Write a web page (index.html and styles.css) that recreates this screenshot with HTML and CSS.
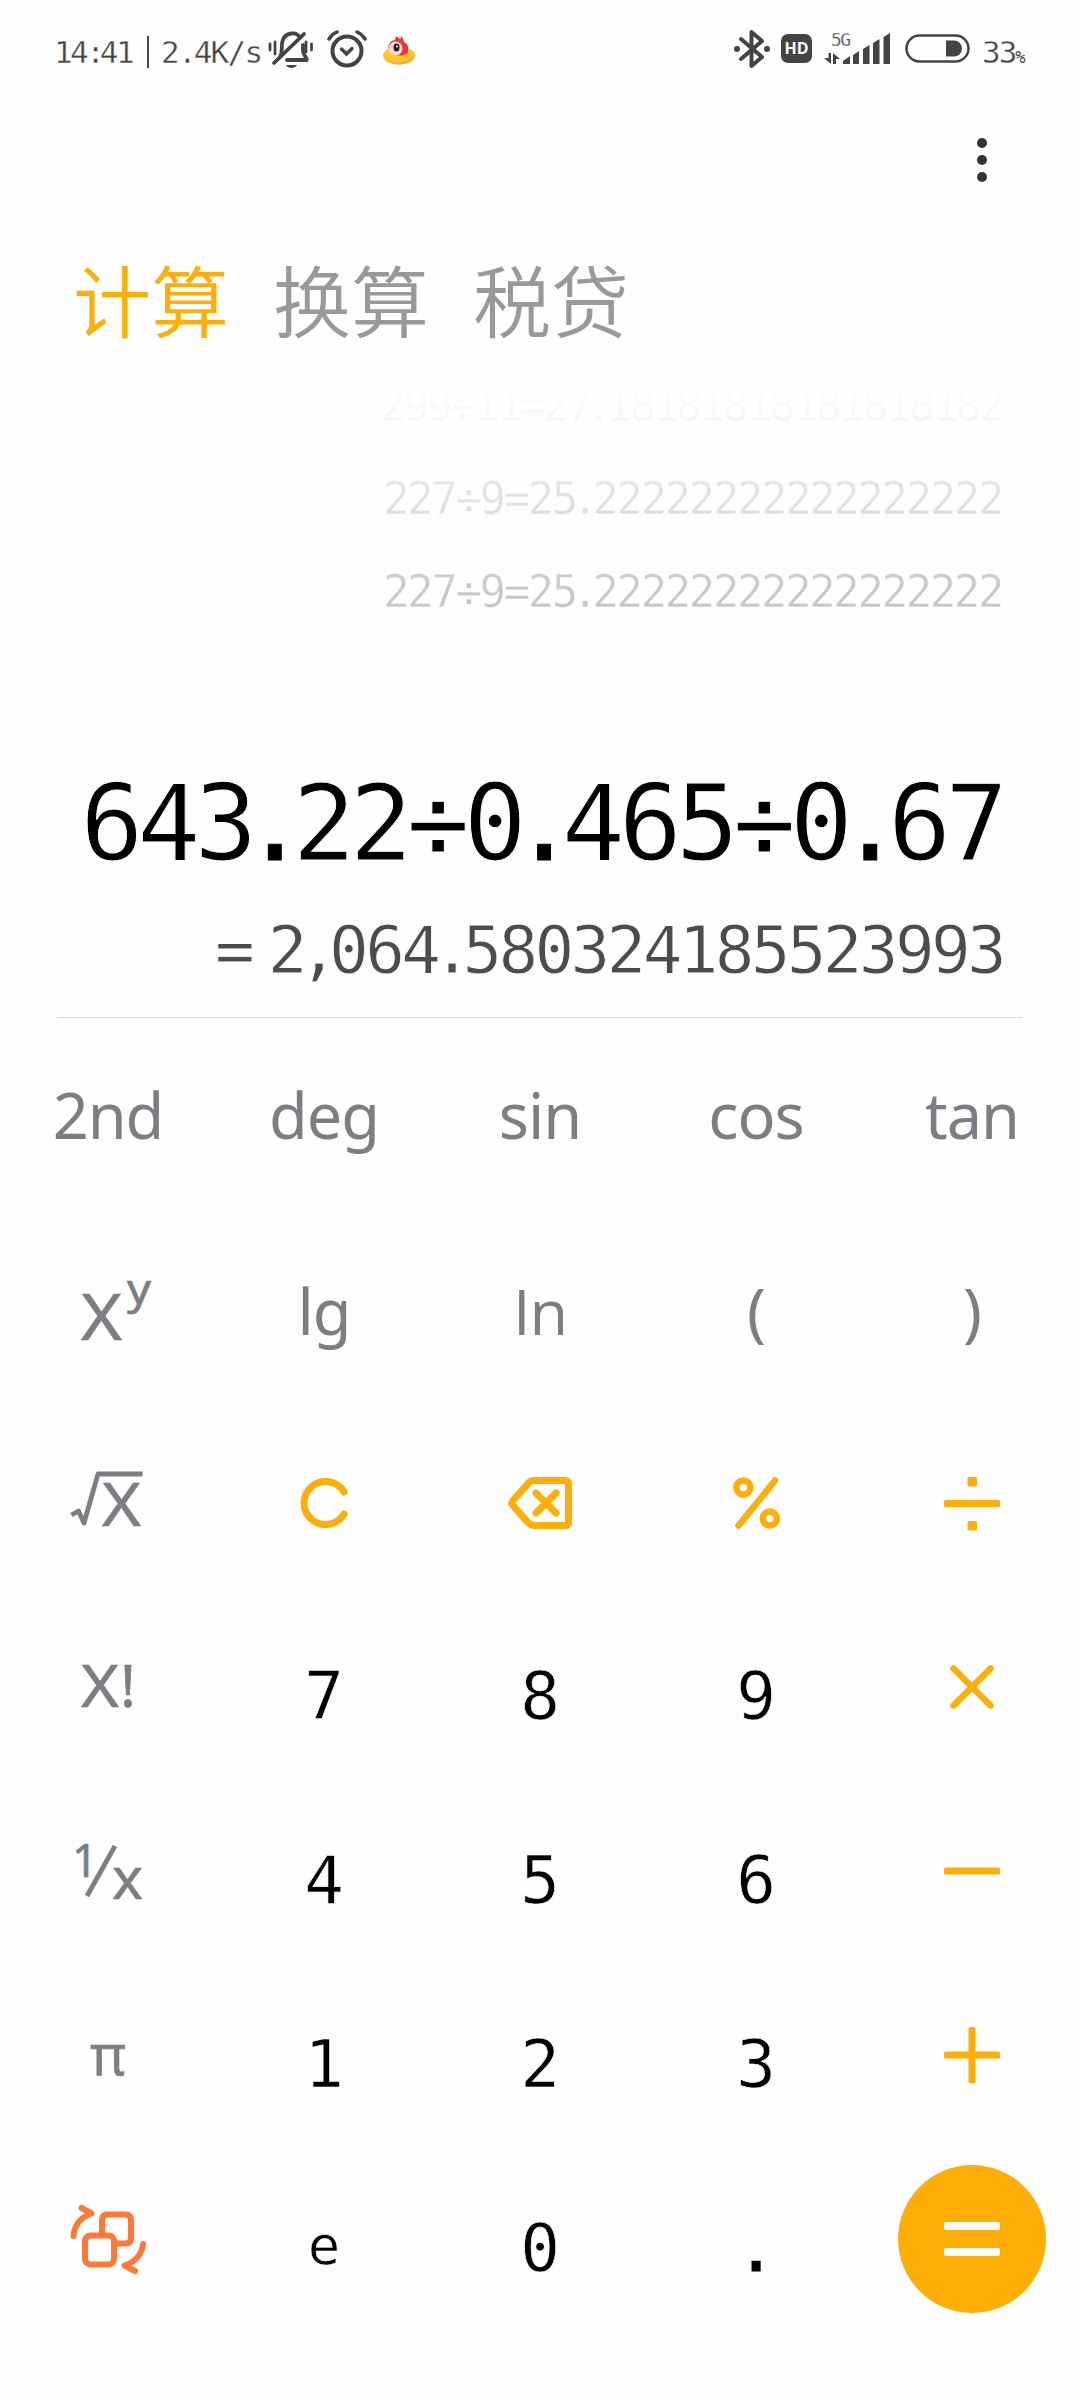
FILE: index.html
```html
<!DOCTYPE html>
<html lang="zh">
  <head>
    <meta charset="UTF-8" />
    <meta name="viewport" content="width=device-width, initial-scale=1.0" />
    <title>计算</title>
    <link rel="stylesheet" href="styles.css">
  </head>
  <body>
    <div class="status-bar">
      <div class="status-left">
        <span class="time">14<i>:</i>41</span>
        <span class="bar"></span>
        <span class="speed">2<i>.</i>4K/s</span>
        <svg class="bell" width="46" height="40" viewBox="0 0 46 40" fill="none" stroke="#444" stroke-width="3.8" stroke-linecap="round">
          <path d="M12 27C15 22 13 16 14.500 11C17 2 29 1 32 8" />
          <path d="M35 15V21C35 26 40 28 38.500 30H19" />
          <path d="M36 4L6 33" />
          <path d="M2 14V20M7 12V24M38 12V22M43.500 14V20" stroke-width="2.8" />
          <path d="M18 35H29C27 39 20 39 18 35Z" fill="#444" stroke="none" />
        </svg>
        <svg class="alarm" width="42" height="40" viewBox="0 0 42 40" fill="none" stroke="#444" stroke-linecap="round">
          <circle cx="21" cy="21" r="14.500" stroke-width="4" />
          <path d="M15.500 19L20.500 24L26 18.500" stroke-width="3.500" />
          <path d="M3 9Q6 4 11 2M31 2Q36 4 39 9" stroke-width="3.500" />
        </svg>
        <svg class="app" width="36" height="32" viewBox="0 0 36 32">
          <ellipse cx="17" cy="20.500" rx="16" ry="9" fill="#ffc629" />
          <path d="M4 24Q18 32 32 21Q31 28 19 29.500Q8 30 4 24Z" fill="#f5a94b" />
          <path d="M6 12Q8 5 13 5L14 1L18 4L20 1L22 7Q27 9 26 15Q27 19 22 20Q13 22 8 17Z" fill="#ea3540" />
          <ellipse cx="13.500" cy="13.500" rx="7" ry="7" fill="#fbd8d4" transform="rotate(35 13.500 13.500)" />
          <ellipse cx="14.500" cy="12.500" rx="3" ry="4" fill="#222" />
          <circle cx="15" cy="11.500" r="1" fill="#fff" />
        </svg>
      </div>
      <div class="status-right">
        <svg class="bluetooth" width="38" height="40" viewBox="0 0 38 40" fill="none" stroke="#444" stroke-width="4" stroke-linejoin="round" stroke-linecap="round">
          <path d="M8 10L29 28L18.500 37V3L29 12L8 30" />
          <circle cx="4" cy="20" r="1.500" stroke-width="3" />
          <circle cx="34" cy="20" r="1.500" stroke-width="3" />
        </svg>
        <span class="hd">HD</span>
        <div class="network">
          <span class="network-type">5G</span>
          <svg width="67" height="32" viewBox="0 0 67 32" fill="#444">
            <path d="M4.500 20H7V31L0 25H4.500ZM9 20L16 26H12V31H9Z" />
            <path d="M19 31V28L26 23V31ZM29 31V22L35 18V31ZM39 31V16L45.500 12V31ZM49 31V10L55.500 6V31ZM59.500 31V4L66 0V31Z" />
          </svg>
        </div>
        <svg class="battery" width="66" height="30" viewBox="0 0 66 30">
          <rect x="1.500" y="1.500" width="62" height="26" rx="13" fill="none" stroke="#444" stroke-width="2.500" />
          <path d="M41 6.500H49A8 8 0 0 1 49 22.500H41Z" fill="#444" />
        </svg>
        <span class="percent">33<small>%</small></span>
      </div>
    </div>

    <div class="toolbar">
      <span class="dot"></span>
      <span class="dot"></span>
      <span class="dot"></span>
    </div>

    <div class="tabs">
      <span class="tab active">计算</span>
      <span class="tab">换算</span>
      <span class="tab">税贷</span>
    </div>

    <div class="history">
      <p class="long">299÷11=27<i>.</i>18181818181818182</p>
      <p>227÷9=25<i>.</i>22222222222222222</p>
      <p>227÷9=25<i>.</i>22222222222222222</p>
    </div>

    <div class="expression">643<i>.</i>22÷0<i>.</i>465÷0<i>.</i>67</div>
    <div class="result">=<i class="space"> </i>2<i>,</i>064<i>.</i>580324185523993</div>

    <div class="keypad">
      <div class="key sci">2nd</div>
      <div class="key sci">deg</div>
      <div class="key sci">sin</div>
      <div class="key sci">cos</div>
      <div class="key sci">tan</div>

      <div class="key">
        <svg class="label" width="100" height="80" viewBox="58 1272 100 80">
          <text x="81" y="1340" font-size="63" textLength="41" lengthAdjust="spacingAndGlyphs">X</text>
          <text x="127" y="1304" font-size="42" textLength="24" lengthAdjust="spacingAndGlyphs">y</text>
        </svg>
      </div>
      <div class="key sci">lg</div>
      <div class="key sci plain">In</div>
      <div class="key sci">(</div>
      <div class="key sci">)</div>

      <div class="key">
        <svg class="label" width="100" height="80" viewBox="58 1463 100 80">
          <path class="line" d="M71.500 1515L78.500 1511L84 1523L98 1474H142.500" />
          <text x="102" y="1526" font-size="60" textLength="39" lengthAdjust="spacingAndGlyphs">X</text>
        </svg>
      </div>
      <div class="key">
        <svg class="icon" width="70" height="70" viewBox="289 1468 70 70">
          <path d="M344 1492A21.500 21.500 0 1 0 344 1514" />
        </svg>
      </div>
      <div class="key">
        <svg class="icon" width="70" height="70" viewBox="505 1468 70 70">
          <path d="M534 1480.500H565Q568.500 1480.500 568.500 1484V1522Q568.500 1525.500 565 1525.500H534Q531 1525.500 529 1523.500L512.500 1505Q511 1503 512.500 1501L529 1482.500Q531 1480.500 534 1480.500Z" />
          <path d="M536 1493L556 1513M556 1493L536 1513" />
        </svg>
      </div>
      <div class="key">
        <svg class="icon" width="70" height="70" viewBox="721 1468 70 70">
          <circle cx="743.300" cy="1487.500" r="7" stroke-width="6.500" />
          <circle cx="769.800" cy="1518.500" r="7" stroke-width="6.500" />
          <path d="M775 1480.500L738.500 1525.500" stroke-width="6.500" />
        </svg>
      </div>
      <div class="key">
        <svg class="icon fill" width="70" height="70" viewBox="937 1468 70 70">
          <rect x="944" y="1500" width="56" height="7" rx="1.500" />
          <rect x="967.500" y="1477" width="9.500" height="9.500" rx="1.500" />
          <rect x="967.500" y="1521" width="9.500" height="9.500" rx="1.500" />
        </svg>
      </div>

      <div class="key">
        <svg class="label" width="100" height="80" viewBox="58 1647 100 80">
          <text x="81" y="1707" font-size="59" textLength="38" lengthAdjust="spacingAndGlyphs">X</text>
          <text x="120" y="1707" font-size="59">!</text>
        </svg>
      </div>
      <div class="key num">7</div>
      <div class="key num">8</div>
      <div class="key num">9</div>
      <div class="key">
        <svg class="icon" width="70" height="70" viewBox="937 1652 70 70">
          <path d="M953.500 1668.500L990.500 1705.500M990.500 1668.500L953.500 1705.500" stroke-width="6.500" />
        </svg>
      </div>

      <div class="key">
        <svg class="label" width="100" height="80" viewBox="58 1831 100 80">
          <text x="72" y="1877" font-size="45">1</text>
          <path class="line" d="M115 1846L87 1896" />
          <text x="112" y="1899" font-size="59" textLength="31" lengthAdjust="spacingAndGlyphs">x</text>
        </svg>
      </div>
      <div class="key num">4</div>
      <div class="key num">5</div>
      <div class="key num">6</div>
      <div class="key">
        <svg class="icon fill" width="70" height="70" viewBox="937 1836 70 70">
          <rect x="944" y="1867.500" width="56" height="7" rx="1.500" />
        </svg>
      </div>

      <div class="key">
        <svg class="label" width="100" height="80" viewBox="58 2015 100 80">
          <text x="90" y="2075" font-size="57" textLength="36" lengthAdjust="spacingAndGlyphs">π</text>
        </svg>
      </div>
      <div class="key num">1</div>
      <div class="key num">2</div>
      <div class="key num">3</div>
      <div class="key">
        <svg class="icon fill" width="70" height="70" viewBox="937 2020 70 70">
          <rect x="944" y="2051.500" width="56" height="7" rx="1.500" />
          <rect x="968.500" y="2027" width="7" height="56" rx="1.500" />
        </svg>
      </div>

      <div class="key">
        <svg class="convert" width="90" height="80" viewBox="63 2199 90 80">
          <path d="M102 2233V2220Q102 2214.500 107.500 2214.500H125.500Q131 2214.500 131 2220V2238Q131 2243.500 125.500 2243.500H117" />
          <rect x="85" y="2235.500" width="29" height="29" rx="5.500" />
          <path d="M73.500 2236Q75 2219 91.500 2213.500L81.500 2208" />
          <path d="M143 2244Q141 2260 124.500 2265.500L135 2271" />
        </svg>
      </div>
      <div class="key num small">e</div>
      <div class="key num">0</div>
      <div class="key num point">.</div>
      <div class="key">
        <div class="equals"><span></span><span></span></div>
      </div>
    </div>
  </body>
</html>
```
FILE: styles.css
```css
* {
  box-sizing: border-box;
}
body {
  margin: 0;
  width: 1080px;
  height: 2400px;
  background-color: #fefefe;
  font-family: "DejaVu Sans Mono", "Noto Sans CJK SC", monospace;
  overflow: hidden;
}
i {
  font-style: normal;
}

/* status bar */
.status-bar {
  height: 100px;
  padding: 0 54px 0 54px;
  display: flex;
  justify-content: space-between;
  color: #444;
  font-size: 31px;
  line-height: 40px;
}
.status-left,
.status-right {
  display: flex;
  align-items: flex-start;
  padding-top: 30px;
}
.time,
.speed,
.percent {
  padding-top: 2px;
  letter-spacing: -2.6px;
  -webkit-text-stroke: 0.4px #fefefe;
}
.time {
  width: 81px;
}
.time i {
  letter-spacing: -5px;
}
.bar {
  width: 2px;
  height: 32px;
  margin: 6px 12px 0 12px;
  background-color: #444;
}
.speed {
  width: 107px;
  letter-spacing: -1.7px;
}
.speed i {
  letter-spacing: -3px;
}
.alarm {
  margin-left: 12px;
}
.app {
  margin: 5px 0 0 14px;
}
.bluetooth {
  margin-top: -1px;
}
.hd {
  width: 31px;
  height: 29px;
  margin: 4px 12px 0 10px;
  border-radius: 7px;
  background-color: #444;
  color: #fff;
  font: bold 16px/29px "Open Sans", sans-serif;
  text-align: center;
}
.network {
  position: relative;
  padding-top: 3px;
  height: 40px;
}
.network-type {
  position: absolute;
  left: 7px;
  top: 0;
  font-size: 18px;
  line-height: 20px;
  letter-spacing: -1.7px;
  -webkit-text-stroke: 0.3px #fefefe;
}
.battery {
  margin: 4px 11px 0 14px;
}
.percent {
  width: 44px;
  letter-spacing: -2px;
  white-space: nowrap;
}
.percent small {
  font-size: 17px;
  -webkit-text-stroke: 0;
}

/* overflow menu */
.toolbar {
  height: 144px;
  padding: 38px 93px 0 0;
  display: flex;
  flex-direction: column;
  align-items: flex-end;
  gap: 7px;
}
.dot {
  width: 10px;
  height: 10px;
  border-radius: 50%;
  background-color: #333;
}

/* tabs */
.tabs {
  display: flex;
  gap: 44px;
  height: 115px;
  padding-left: 73px;
  font-family: "Noto Sans CJK SC", sans-serif;
  font-weight: 350;
  font-size: 78px;
  line-height: 108px;
  color: #999;
}
.tab.active {
  color: #ffae08;
}

/* history fades out towards the top */
.history {
  height: 405px;
  padding-right: 78px;
  text-align: right;
  font-size: 44px;
  line-height: 93px;
  letter-spacing: -2.4px;
  color: #c8c8c8;
  -webkit-text-stroke: 0.5px #fefefe;
  -webkit-mask-image: linear-gradient(transparent 28px, #000 235px);
  mask-image: linear-gradient(transparent 28px, #000 235px);
}
.history p {
  margin: 0;
}
.history i {
  margin-left: -4px;
  letter-spacing: -6px;
}
.history .long {
  letter-spacing: -3.2px;
}

.expression {
  height: 147px;
  padding-right: 78px;
  text-align: right;
  font-size: 105px;
  line-height: 120px;
  letter-spacing: -6.2px;
  color: #000;
  white-space: nowrap;
  -webkit-text-stroke: 1px #fefefe;
}
.expression i {
  margin-left: -8px;
  letter-spacing: -14px;
  -webkit-text-stroke: 1px #000;
}
.result {
  height: 107px;
  margin: 0 58px 0 57px;
  padding-right: 19px;
  border-bottom: 1px solid #d8d8d8;
  text-align: right;
  font-size: 66px;
  line-height: 80px;
  letter-spacing: -3.7px;
  color: #4c4c4c;
  white-space: pre;
  -webkit-text-stroke: 0.8px #fefefe;
}
.result i {
  margin-left: -5px;
  letter-spacing: -9.5px;
}
.result .space {
  letter-spacing: -18px;
}

/* keypad */
.keypad {
  display: grid;
  grid-template-columns: repeat(5, 216px);
  grid-template-rows: 194px 199px repeat(5, 184px);
}
.key {
  display: flex;
  align-items: center;
  justify-content: center;
}
.sci {
  padding-bottom: 2px;
  font-family: "Noto Sans", sans-serif;
  font-size: 63px;
  letter-spacing: -1px;
  color: #7d7d83;
}
.sci.plain {
  font-family: "Open Sans", sans-serif;
}
.num {
  padding-top: 18px;
  font-size: 66px;
  color: #000;
  -webkit-text-stroke: 0.6px #fefefe;
}
.num.small {
  padding-top: 12px;
  font-size: 54px;
}
.num.point {
  -webkit-text-stroke: 1px #000;
}
.label {
  font-family: "Noto Sans", sans-serif;
  fill: #7d7d83;
  overflow: visible;
}
.label text {
  stroke: #7d7d83;
  stroke-width: 0.6;
}
.label .line {
  fill: none;
  stroke: #7d7d83;
  stroke-width: 4.8;
  stroke-linejoin: round;
}
.icon {
  fill: none;
  stroke: #ffae08;
  stroke-width: 7;
  stroke-linecap: round;
}
.icon.fill {
  fill: #ffae08;
  stroke: none;
}
.convert {
  fill: none;
  stroke: #ff7838;
  stroke-width: 6;
  stroke-linecap: round;
  stroke-linejoin: round;
}
.equals {
  width: 148px;
  height: 148px;
  border-radius: 50%;
  background-color: #ffae08;
  display: flex;
  flex-direction: column;
  align-items: center;
  justify-content: center;
  gap: 18px;
}
.equals span {
  width: 56px;
  height: 8px;
  border-radius: 2px;
  background-color: #fff;
}
```
